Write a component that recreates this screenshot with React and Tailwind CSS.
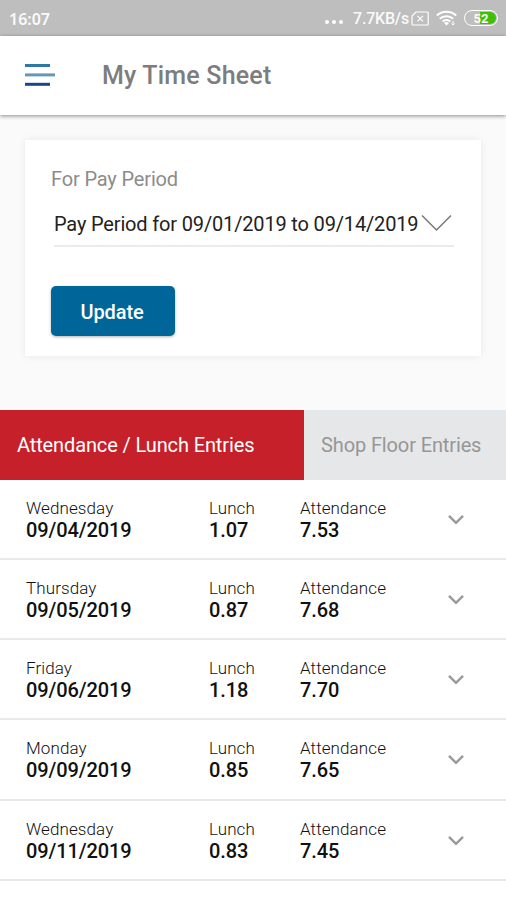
const entries = [
  { day: 'Wednesday', date: '09/04/2019', lunch: '1.07', attendance: '7.53' },
  { day: 'Thursday', date: '09/05/2019', lunch: '0.87', attendance: '7.68' },
  { day: 'Friday', date: '09/06/2019', lunch: '1.18', attendance: '7.70' },
  { day: 'Monday', date: '09/09/2019', lunch: '0.85', attendance: '7.65' },
  { day: 'Wednesday', date: '09/11/2019', lunch: '0.83', attendance: '7.45' },
];

function StatusBar() {
  return (
    <div className="flex h-9 items-center bg-[#bebebe] pr-2 pl-[9px] text-[#fafafa]">
      <span className="grow pt-0.5 font-['Noto_Sans',sans-serif] text-base font-semibold">16:07</span>
      <div className="mt-2 mr-[10px] flex gap-[3px]">
        <i className="size-1 rounded-full bg-white" />
        <i className="size-1 rounded-full bg-white" />
        <i className="size-1 rounded-full bg-white" />
      </div>
      <span className="w-[55px] pt-0.5 text-base font-medium tracking-[-0.2px] whitespace-nowrap">7.7KB/s</span>
      <svg className="mr-[7px] ml-[3px] h-[15px] w-[18px]" viewBox="0 0 18 15" fill="none" stroke="white" strokeWidth="1.2">
        <path d="M5 1h11.5a.7.7 0 0 1 .7.7v11.6a.7.7 0 0 1-.7.7H1.7a.7.7 0 0 1-.7-.7V5z" />
        <path d="m6.500 4.800 5.500 5.500m0-5.500-5.500 5.500" />
      </svg>
      <svg className="mr-[7px] h-[17px] w-[21px]" viewBox="0 0 21 17" fill="none" stroke="white" strokeWidth="2">
        <path d="M.8 5.6c5.5-5 13.900-5 19.400 0M3.800 8.700c3.800-3.400 9.600-3.400 13.400 0M6.700 11.500c2.200-1.900 5.400-1.900 7.600 0" />
        <path d="M8 13q2.500-2 5 0l-2.500 2.600z" fill="white" stroke="none" />
        <path d="M17 11v4m-1.500-1.500L17 15l1.500-1.500" strokeWidth="1" />
      </svg>
      <div className="flex h-[16px] w-[34px] items-center rounded-full border-[1.5px] border-white p-[1px]">
        <div className="flex h-full w-full items-center justify-center rounded-full bg-[linear-gradient(90deg,#bebebe_46%,#3fc008_46%)] text-[13px] leading-none font-bold">52</div>
      </div>
    </div>
  );
}

function Header() {
  return (
    <header className="relative flex h-[79px] items-center bg-white pl-[25px] shadow-[0_1px_4px_rgba(0,0,0,0.45)]">
      <svg className="mb-[2px] h-[24px] w-[30px]" viewBox="0 0 30 24">
        <path d="M0 2.500h25" stroke="#2c78a6" strokeWidth="3" />
        <path d="M0 11.900h30" stroke="#6796b8" strokeWidth="3" />
        <path d="M0 21.300h25" stroke="#1b458d" strokeWidth="3" />
      </svg>
      <h1 className="ml-[47px] text-[25px] font-medium tracking-[0.2px] text-[#7d7d7d]">My Time Sheet</h1>
    </header>
  );
}

function PayPeriodCard() {
  return (
    <section className="mx-[25px] mt-[25px] flex h-[216px] flex-col items-start bg-white px-[26px] pt-[26px] shadow-[0_0_7px_rgba(0,0,0,0.08)]">
      <label className="text-[20px] leading-[26px] tracking-[-0.15px] text-[#8c8c8c]">For Pay Period</label>
      <div className="mt-[11px] ml-[3px] flex h-[44px] w-[400px] border-b-2 border-[#ebebeb]">
        <span className="pt-[7px] text-[20px] leading-[28px] tracking-[-0.16px] whitespace-nowrap text-[#222]">Pay Period for 09/01/2019 to 09/14/2019</span>
        <svg className="mt-[11px] mr-[1px] ml-auto h-[18px] w-[32px] shrink-0" viewBox="0 0 32 18" fill="none" stroke="#777" strokeWidth="1.500">
          <path d="M1 1.500 15.500 16 30 1.500" />
        </svg>
      </div>
      <button className="mt-[39px] h-[50px] w-[124px] rounded-[5px] bg-[#006699] pt-px pr-[2px] text-[20px] font-medium tracking-[-0.1px] text-white shadow-[0_1px_3px_rgba(0,0,0,0.3)]">Update</button>
    </section>
  );
}

function Cell({ label, value, className }) {
  return (
    <div className={className}>
      <div className="text-[17px] leading-[22px] font-light tracking-[0.1px] text-[#111]"><span>{label}</span></div>
      <div className="text-[20px] leading-[22px] font-medium tracking-[-0.1px] text-[#111]"><span>{value}</span></div>
    </div>
  );
}

export default function App() {
  return (
    <div className="h-[900px] w-[506px] overflow-hidden bg-white font-[Roboto,sans-serif]">
      <div className="h-[410px] bg-[#fafafa]">
        <StatusBar />
        <Header />
        <PayPeriodCard />
      </div>
      <nav className="flex h-[70px] bg-[#e6e7e8] text-[20px] tracking-[-0.12px]">
        <div className="flex w-[304px] items-center bg-[#c6202b] pl-[17px] text-white"><span>Attendance / Lunch Entries</span></div>
        <div className="flex items-center pl-[17px] text-[#969696]"><span>Shop Floor Entries</span></div>
      </nav>
      {entries.map((e) => (
        <div key={e.date} className="flex h-[80.150px] border-b-2 border-[#e9e9e9] pt-[17px] pl-[26px]">
          <Cell className="w-[183px]" label={e.day} value={e.date} />
          <Cell className="w-[91px]" label="Lunch" value={e.lunch} />
          <Cell className="w-[147px]" label="Attendance" value={e.attendance} />
          <svg className="mt-[17px] h-[12px] w-[18px]" viewBox="0 0 18 12" fill="none" stroke="#999" strokeWidth="2.400">
            <path d="m2 1.800 7 7 7-7" />
          </svg>
        </div>
      ))}
    </div>
  );
}
